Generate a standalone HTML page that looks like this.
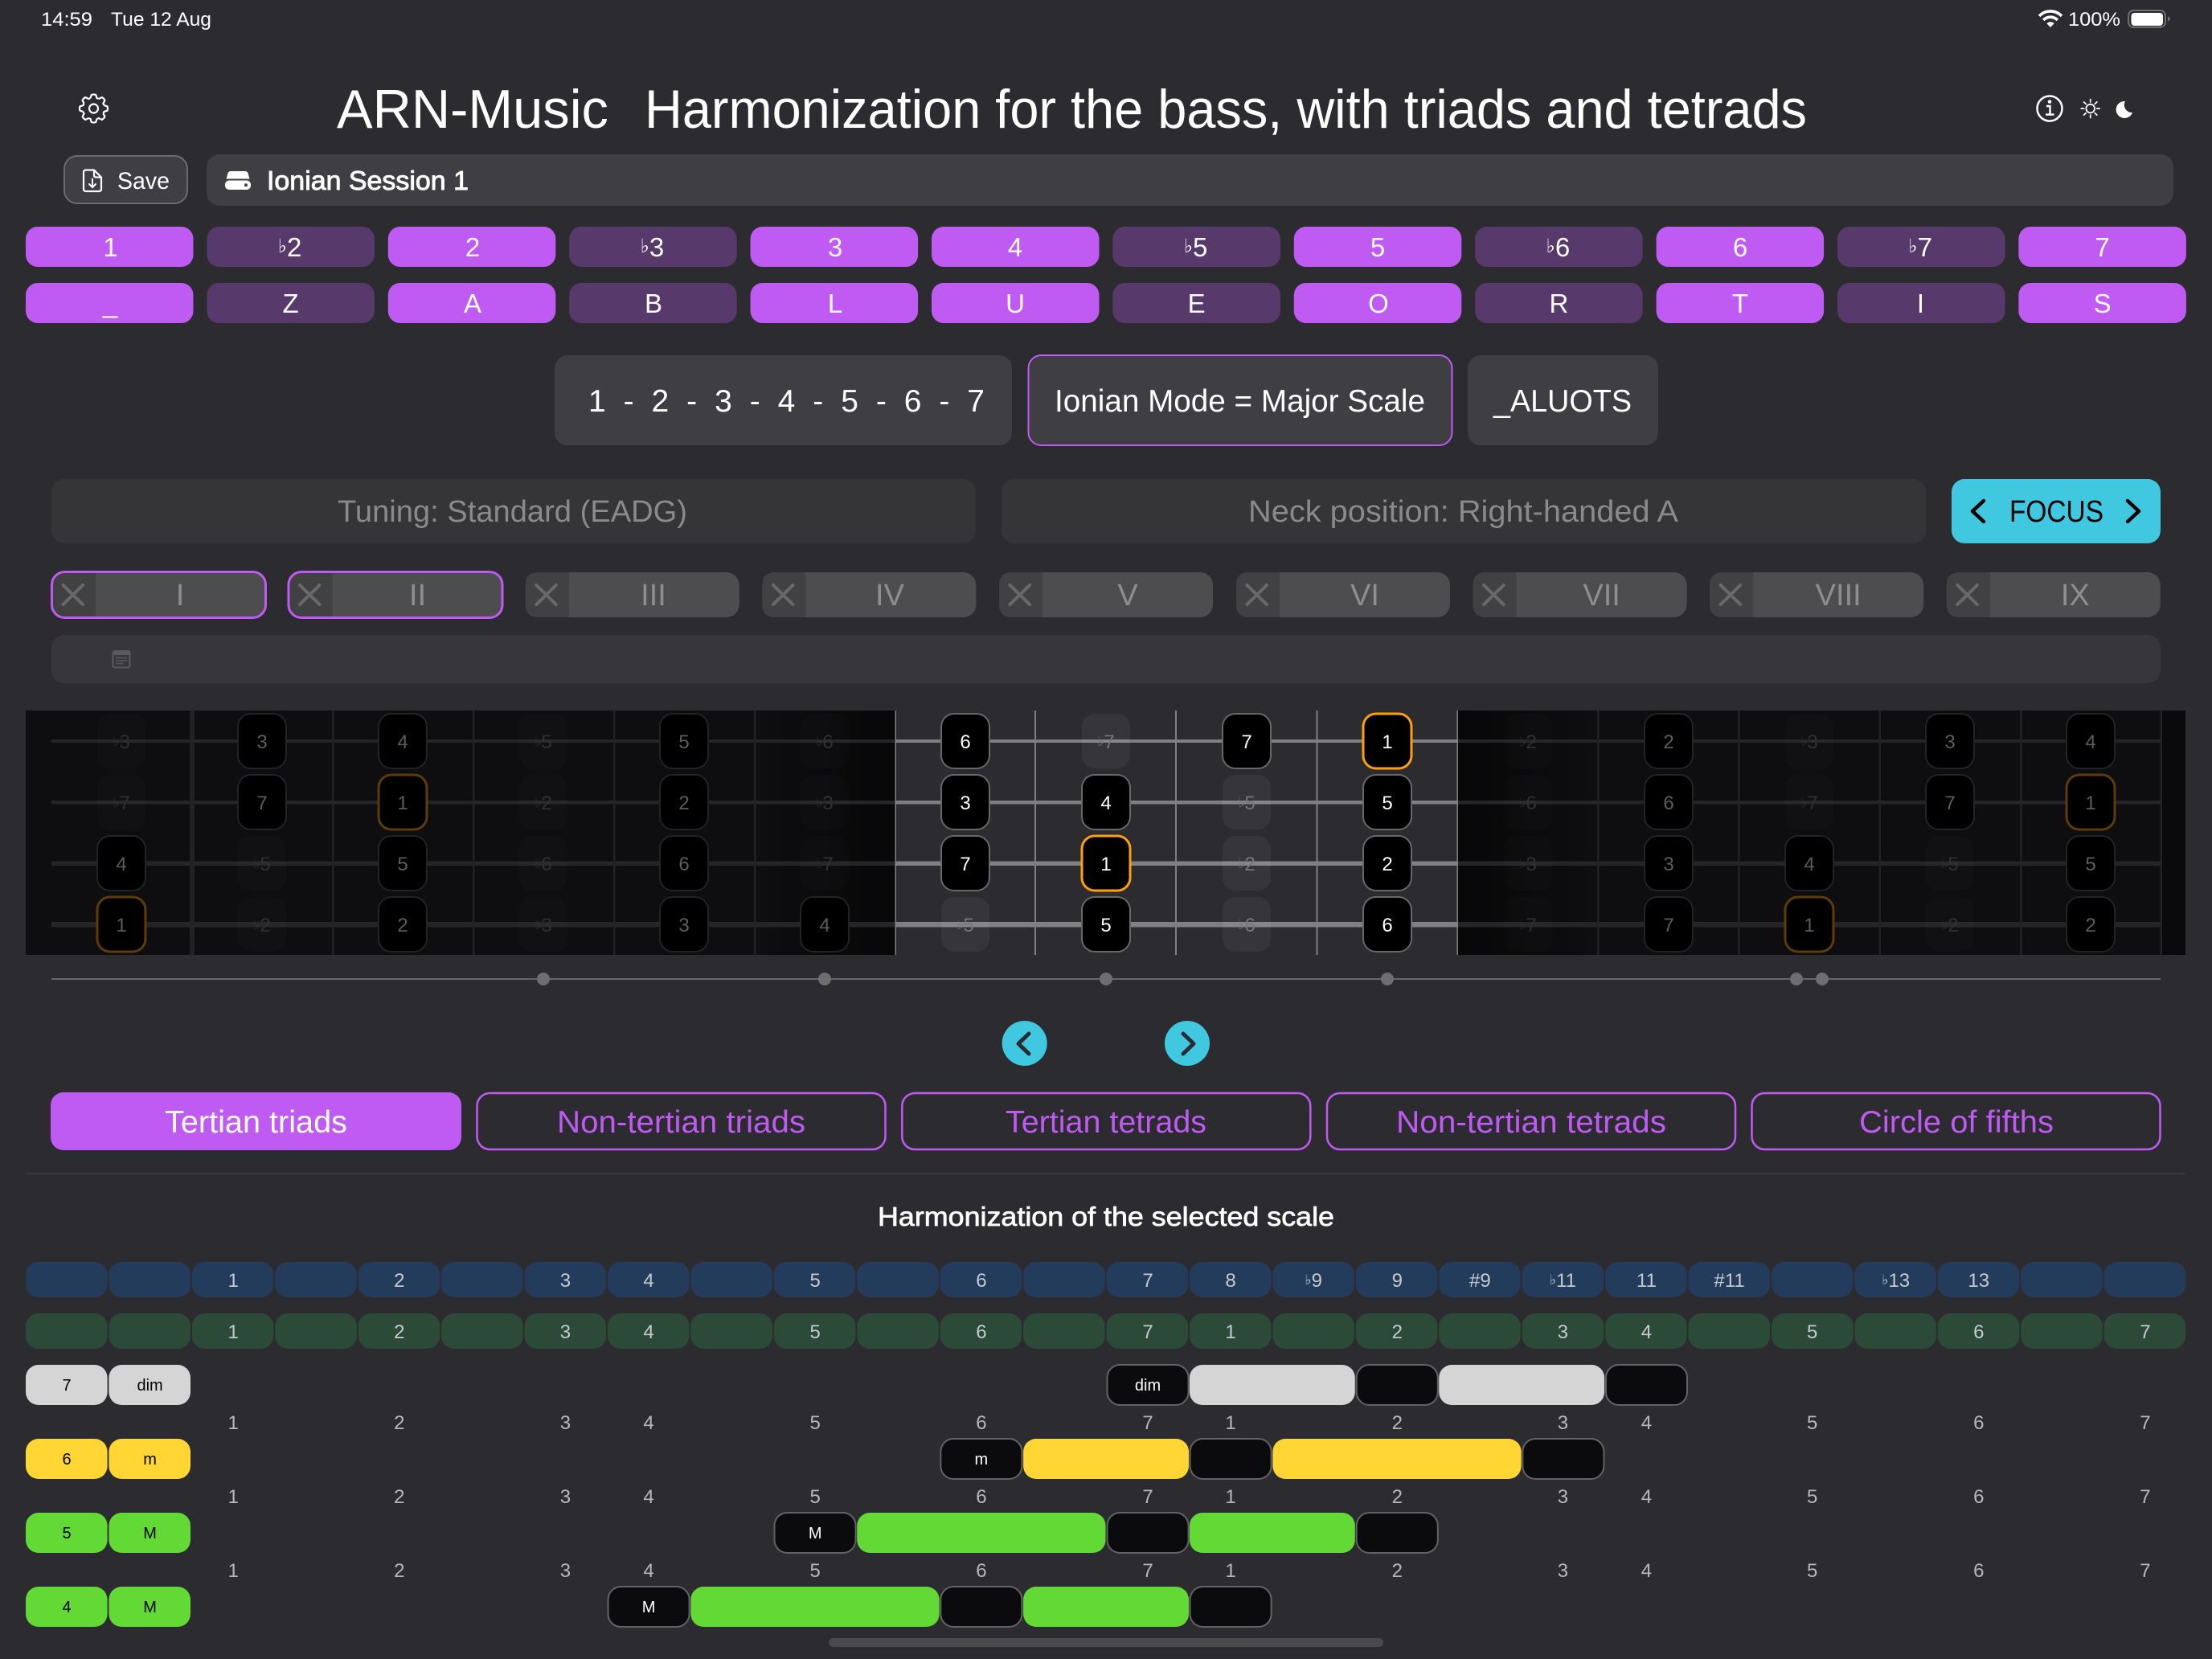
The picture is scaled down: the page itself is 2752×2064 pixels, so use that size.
<!DOCTYPE html>
<html lang="en"><head><meta charset="utf-8"><title>ARN-Music</title>
<style>
html,body{margin:0;padding:0;background:#2c2c30;width:2752px;height:2064px;overflow:hidden}
svg{display:block}
text{font-family:"Liberation Sans","DejaVu Sans",sans-serif;fill:#fff}
.m{text-anchor:middle}
.f{font-size:.72em;baseline-shift:.2em;font-family:"DejaVu Sans",sans-serif;font-weight:bold}
.k{width:208.5px;height:50px;rx:15px;ry:15px}
.on{fill:#bf5af2}.off{fill:#57396b}
.kt{font-size:33px;text-anchor:middle}
.pa{width:266px;height:56px;rx:16px;ry:16px;fill:#4d4d4f}
.pb{fill:#414143}
.pt{font-size:38px;text-anchor:middle;fill:#8e8e90}
.x{stroke:#69696b;stroke-width:4;stroke-linecap:round;fill:none}
.N{width:60px;height:68px;rx:16px;ry:16px}
.nt{font-size:24px;text-anchor:middle}
.da{fill:#000;stroke:#232325;stroke-width:2}
.dr{fill:#000;stroke:#5e3c0a;stroke-width:3}
.di{fill:#fff;fill-opacity:.015}
.la{fill:#000;stroke:#68686b;stroke-width:2}
.lr{fill:#000;stroke:#ff9f0a;stroke-width:3}
.li{fill:#fff;fill-opacity:.05}
.dt{fill:#5c5c5e}.dti{fill:#303032}.lt{fill:#fff}.lti{fill:#77777a}
.tab{width:508px;height:70px;rx:16px;ry:16px;fill:none;stroke:#bf5af2;stroke-width:2.5}
.tt{font-size:39px;fill:#bf5af2}
.c{width:101.5px;height:44px;rx:16px;ry:16px}
.bl{fill:#243c5c}.gr{fill:#2b4b38}
.ct{font-size:24px;text-anchor:middle;fill:#c4cad0}
.nm{font-size:24px;text-anchor:middle;fill:#b8b8ba}
.h{height:50px;rx:16px;ry:16px}
.w{width:101.5px}.w2{width:205.7px}.w3{width:309px}
.g1{fill:#d5d5d5}.y1{fill:#ffd633}.g2{fill:#62d935}
.b{width:101px;height:50px;rx:16px;ry:16px;fill:#0b0b0d;stroke:#636366;stroke-width:2}
.lb{font-size:20px;text-anchor:middle;fill:#000}
.lw{font-size:20px;text-anchor:middle;fill:#fff}
</style></head><body>
<svg xmlns="http://www.w3.org/2000/svg" width="2752" height="2064" viewBox="0 0 2752 2064">
<defs>
<linearGradient id="gl" x1="0" x2="1" y1="0" y2="0"><stop offset="0" stop-color="#0e0e10"/><stop offset="1" stop-color="#070708"/></linearGradient>
<linearGradient id="gr" x1="0" x2="1" y1="0" y2="0"><stop offset="0" stop-color="#070708"/><stop offset="1" stop-color="#0e0e10"/></linearGradient>
</defs>
<rect width="2752" height="2064" fill="#2c2c30"/>

<!-- status bar -->
<text x="51" y="32" font-size="24" textLength="64" lengthAdjust="spacingAndGlyphs">14:59</text>
<text x="138" y="32" font-size="24" textLength="125" lengthAdjust="spacingAndGlyphs">Tue 12 Aug</text>
<g fill="none" stroke="#fff" stroke-width="3.6">
<path d="M2537.1 20A19 19 0 0 1 2564.9 20"/>
<path d="M2542.2 25A12 12 0 0 1 2559.8 25"/>
</g>
<path d="M2546.4 29.2A6.5 6.5 0 0 1 2555.6 29.2L2551 34Z" fill="#fff"/>
<text x="2573" y="32" font-size="24" textLength="65" lengthAdjust="spacingAndGlyphs">100%</text>
<rect x="2648" y="13" width="46" height="21" rx="6.5" fill="none" stroke="#6e6e70" stroke-width="2"/>
<rect x="2651.5" y="16" width="39.5" height="16" rx="4" fill="#fff"/>
<path d="M2697 20.5Q2700 21 2700 23.5Q2700 26 2697 26.5Z" fill="#6e6e70"/>

<!-- header -->
<g transform="translate(116.5 135)" fill="none" stroke="#fff" stroke-width="2.2" stroke-linejoin="round">
<path d="M-3.95-12.9L-2.74-17Q0-18 2.74-17L3.95-12.9A13.5 13.5 0 0 1 6.33-11.92"/>
<path transform="rotate(45)" d="M-3.95-12.9L-2.74-17Q0-18 2.74-17L3.95-12.9A13.5 13.5 0 0 1 6.33-11.92"/>
<path transform="rotate(90)" d="M-3.95-12.9L-2.74-17Q0-18 2.74-17L3.95-12.9A13.5 13.5 0 0 1 6.33-11.92"/>
<path transform="rotate(135)" d="M-3.95-12.9L-2.74-17Q0-18 2.74-17L3.95-12.9A13.5 13.5 0 0 1 6.33-11.92"/>
<path transform="rotate(180)" d="M-3.95-12.9L-2.74-17Q0-18 2.74-17L3.95-12.9A13.5 13.5 0 0 1 6.33-11.92"/>
<path transform="rotate(225)" d="M-3.95-12.9L-2.74-17Q0-18 2.74-17L3.95-12.9A13.5 13.5 0 0 1 6.33-11.92"/>
<path transform="rotate(270)" d="M-3.95-12.9L-2.74-17Q0-18 2.74-17L3.95-12.9A13.5 13.5 0 0 1 6.33-11.92"/>
<path transform="rotate(315)" d="M-3.95-12.9L-2.74-17Q0-18 2.74-17L3.95-12.9A13.5 13.5 0 0 1 6.33-11.92"/>
<circle r="5.5"/>
</g>
<text x="419" y="159" font-size="68" textLength="338" lengthAdjust="spacingAndGlyphs">ARN-Music</text>
<text x="802" y="159" font-size="68" textLength="1446" lengthAdjust="spacingAndGlyphs">Harmonization for the bass, with triads and tetrads</text>
<circle cx="2550" cy="135" r="15.5" fill="none" stroke="#fff" stroke-width="2.5"/>
<circle cx="2550" cy="126.5" r="2.3" fill="#fff"/>
<path d="M2546 132h4.5v10.5M2545 142.5h10.5" fill="none" stroke="#fff" stroke-width="2.4"/>
<circle cx="2600.7" cy="135" r="5.3" fill="none" stroke="#fff" stroke-width="1.8"/>
<path d="M2600.7 123.5v3.5M2600.7 143v3.500M2589.200 135h3.500M2608.700 135h3.500M2592.600 126.900l2.500 2.500M2606.300 140.600l2.500 2.500M2592.600 143.100l2.500-2.500M2606.300 129.400l2.500-2.500" stroke="#fff" stroke-width="1.7" stroke-linecap="round"/>
<path d="M2644 126A10.500 10.500 0 1 0 2653 140A9.500 9.500 0 0 1 2644 126Z" fill="#fff"/>

<!-- save + session -->
<rect x="80" y="194" width="153" height="59" rx="16" fill="#3e3e43" stroke="#6b6b6e" stroke-width="2"/>
<path d="M107 211.500H117L126 220.500V235Q126 238 123 238H107Q104 238 104 235V214.500Q104 211.500 107 211.500ZM117 211.500V218Q117 220.500 119.500 220.500H126" fill="none" stroke="#fff" stroke-width="2.200" stroke-linejoin="round"/>
<path d="M115 222.500V233M111 229l4 4.200 4-4.200" fill="none" stroke="#fff" stroke-width="2" stroke-linecap="round" stroke-linejoin="round"/>
<text x="146" y="235" font-size="30" textLength="65" lengthAdjust="spacingAndGlyphs">Save</text>
<rect x="257" y="192" width="2447" height="64" rx="16" fill="#3e3e43"/>
<path d="M287 213H305Q307.500 213 308.500 215.500L310.500 222.500H281.500L283.500 215.500Q284.500 213 287 213Z" fill="#fff"/>
<rect x="280" y="224.500" width="32" height="11.500" rx="5" fill="#fff"/>
<circle cx="306" cy="230.200" r="2" fill="#3e3e43"/>
<text x="332" y="236" font-size="33" stroke="#fff" stroke-width=".9" textLength="251" lengthAdjust="spacingAndGlyphs">Ionian Session 1</text>

<!-- key rows -->
<rect class="k on" x="32" y="282"/><rect class="k off" x="257.400" y="282"/><rect class="k on" x="482.800" y="282"/><rect class="k off" x="708.200" y="282"/><rect class="k on" x="933.600" y="282"/><rect class="k on" x="1159" y="282"/><rect class="k off" x="1384.400" y="282"/><rect class="k on" x="1609.800" y="282"/><rect class="k off" x="1835.200" y="282"/><rect class="k on" x="2060.600" y="282"/><rect class="k off" x="2286" y="282"/><rect class="k on" x="2511.400" y="282"/>
<text class="kt" x="137.500" y="319">1</text><text class="kt" x="360.600" y="319"><tspan class="f">♭</tspan>2</text><text class="kt" x="588" y="319">2</text><text class="kt" x="811.500" y="319"><tspan class="f">♭</tspan>3</text><text class="kt" x="1039" y="319">3</text><text class="kt" x="1263" y="319">4</text><text class="kt" x="1487.600" y="319"><tspan class="f">♭</tspan>5</text><text class="kt" x="1714" y="319">5</text><text class="kt" x="1938.400" y="319"><tspan class="f">♭</tspan>6</text><text class="kt" x="2165" y="319">6</text><text class="kt" x="2389.200" y="319"><tspan class="f">♭</tspan>7</text><text class="kt" x="2615.600" y="319">7</text>
<rect class="k on" x="32" y="352"/><rect class="k off" x="257.400" y="352"/><rect class="k on" x="482.800" y="352"/><rect class="k off" x="708.200" y="352"/><rect class="k on" x="933.600" y="352"/><rect class="k on" x="1159" y="352"/><rect class="k off" x="1384.400" y="352"/><rect class="k on" x="1609.800" y="352"/><rect class="k off" x="1835.200" y="352"/><rect class="k on" x="2060.600" y="352"/><rect class="k off" x="2286" y="352"/><rect class="k on" x="2511.400" y="352"/>
<text class="kt" x="137" y="389">_</text><text class="kt" x="361.600" y="389">Z</text><text class="kt" x="588" y="389">A</text><text class="kt" x="813" y="389">B</text><text class="kt" x="1039" y="389">L</text><text class="kt" x="1263" y="389">U</text><text class="kt" x="1488.600" y="389">E</text><text class="kt" x="1715" y="389">O</text><text class="kt" x="1939.400" y="389">R</text><text class="kt" x="2165" y="389">T</text><text class="kt" x="2389.500" y="389">I</text><text class="kt" x="2615.600" y="389">S</text>

<!-- mode boxes -->
<rect x="690" y="442" width="569" height="112" rx="16" fill="#3e3e43"/>
<text x="732" y="512" font-size="39" textLength="493" lengthAdjust="spacing">1 - 2 - 3 - 4 - 5 - 6 - 7</text>
<rect x="1279.500" y="442" width="527" height="112" rx="16" fill="#3e3e43" stroke="#bf5af2" stroke-width="2"/>
<text x="1312" y="512" font-size="39" textLength="461" lengthAdjust="spacingAndGlyphs">Ionian Mode = Major Scale</text>
<rect x="1826" y="442" width="237" height="112" rx="16" fill="#3e3e43"/>
<text x="1858" y="512" font-size="39" textLength="172" lengthAdjust="spacingAndGlyphs">_ALUOTS</text>

<!-- tuning / neck / focus -->
<rect x="64" y="596" width="1150" height="80" rx="16" fill="#353538"/>
<text x="420" y="649" font-size="38" style="fill:#8a8a8c" textLength="435" lengthAdjust="spacingAndGlyphs">Tuning: Standard (EADG)</text>
<rect x="1246" y="596" width="1150" height="80" rx="16" fill="#353538"/>
<text x="1553" y="649" font-size="38" style="fill:#8a8a8c" textLength="535" lengthAdjust="spacingAndGlyphs">Neck position: Right-handed A</text>
<rect x="2428" y="596" width="260" height="80" rx="16" fill="#40c8e0"/>
<path d="M2468 623L2454 636L2468 649M2647 623L2661 636L2647 649" fill="none" stroke="#000" stroke-width="4.500" stroke-linecap="round" stroke-linejoin="round"/>
<text x="2500" y="649" font-size="38" style="fill:#000" textLength="117" lengthAdjust="spacingAndGlyphs">FOCUS</text>

<!-- position pills -->
<g>
<rect class="pa" x="65" y="712"/><path class="pb" d="M119 712H81Q65 712 65 728V752Q65 768 81 768H119Z"/>
<rect class="pa" x="359.600" y="712"/><path class="pb" d="M413.600 712H375.600Q359.600 712 359.600 728V752Q359.600 768 375.600 768H413.600Z"/>
<rect class="pa" x="653.800" y="712"/><path class="pb" d="M707.800 712H669.800Q653.800 712 653.800 728V752Q653.800 768 669.800 768H707.800Z"/>
<rect class="pa" x="948.400" y="712"/><path class="pb" d="M1002.400 712H964.400Q948.400 712 948.400 728V752Q948.400 768 964.400 768H1002.400Z"/>
<rect class="pa" x="1243" y="712"/><path class="pb" d="M1297 712H1259Q1243 712 1243 728V752Q1243 768 1259 768H1297Z"/>
<rect class="pa" x="1538" y="712"/><path class="pb" d="M1592 712H1554Q1538 712 1538 728V752Q1538 768 1554 768H1592Z"/>
<rect class="pa" x="1832.600" y="712"/><path class="pb" d="M1886.600 712H1848.600Q1832.600 712 1832.600 728V752Q1832.600 768 1848.600 768H1886.600Z"/>
<rect class="pa" x="2127.200" y="712"/><path class="pb" d="M2181.200 712H2143.200Q2127.200 712 2127.200 728V752Q2127.200 768 2143.200 768H2181.200Z"/>
<rect class="pa" x="2421.800" y="712"/><path class="pb" d="M2475.800 712H2437.800Q2421.800 712 2421.800 728V752Q2421.800 768 2437.800 768H2475.800Z"/>
</g>
<rect x="64.500" y="711.500" width="266" height="57" rx="16" fill="none" stroke="#bf5af2" stroke-width="3"/>
<rect x="359" y="711.500" width="266" height="57" rx="16" fill="none" stroke="#bf5af2" stroke-width="3"/>
<path class="x" d="M78.500 728L103 752M103 728L78.500 752M373 728L397.500 752M397.500 728L373 752M667.300 728L691.800 752M691.800 728L667.300 752M961.900 728L986.400 752M986.400 728L961.900 752M1256.500 728L1281 752M1281 728L1256.500 752M1551.500 728L1576 752M1576 728L1551.500 752M1846.100 728L1870.600 752M1870.600 728L1846.100 752M2140.700 728L2165.200 752M2165.200 728L2140.700 752M2435.300 728L2459.800 752M2459.800 728L2435.300 752"/>
<text class="pt" x="224" y="753">I</text><text class="pt" x="519.600" y="753">II</text><text class="pt" x="813" y="753">III</text><text class="pt" x="1107" y="753">IV</text><text class="pt" x="1403" y="753">V</text><text class="pt" x="1698" y="753">VI</text><text class="pt" x="1992.600" y="753">VII</text><text class="pt" x="2287.200" y="753">VIII</text><text class="pt" x="2581.800" y="753">IX</text>

<!-- note bar -->
<rect x="64" y="790" width="2624" height="60" rx="16" fill="#37373b"/>
<rect x="140.500" y="810" width="21" height="20.500" rx="2.500" fill="none" stroke="#5a5a5c" stroke-width="2"/>
<path d="M140 812Q140 809 143 809H159Q162 809 162 812V815H140Z" fill="#5a5a5c"/>
<path d="M144 818.500H158M144 822H158M144 825.500H153" stroke="#5a5a5c" stroke-width="1.500"/>

<!-- fretboard -->
<rect x="32" y="884" width="2687" height="304" fill="#0e0e10"/>
<rect x="939" y="884" width="175" height="304" fill="url(#gl)"/>
<rect x="1813" y="884" width="175" height="304" fill="url(#gr)"/>
<rect x="2689" y="884" width="30" height="304" fill="#0a0a0c"/>
<rect x="1114" y="884" width="699" height="304" fill="#2c2c30"/>
<g fill="#252527">
<rect x="64" y="920" width="1050" height="4"/><rect x="64" y="996" width="1050" height="4.500"/><rect x="64" y="1071.500" width="1050" height="5.500"/><rect x="64" y="1147" width="1050" height="6.500"/>
<rect x="1813" y="920" width="875" height="4"/><rect x="1813" y="996" width="875" height="4.500"/><rect x="1813" y="1071.500" width="875" height="5.500"/><rect x="1813" y="1147" width="875" height="6.500"/>
</g>
<g fill="#808082">
<rect x="1114" y="920" width="699" height="4"/><rect x="1114" y="996" width="699" height="4.500"/><rect x="1114" y="1071.500" width="699" height="5.500"/><rect x="1114" y="1147" width="699" height="6.500"/>
<rect x="1113.500" y="884" width="1.500" height="304"/><rect x="1287" y="884" width="2" height="304"/><rect x="1462" y="884" width="2" height="304"/><rect x="1637.500" y="884" width="2" height="304"/><rect x="1812.500" y="884" width="1.500" height="304"/>
</g>
<g fill="#222224">
<rect x="236" y="884" width="6" height="304"/>
<rect x="413" y="884" width="2.500" height="304"/><rect x="588" y="884" width="2.500" height="304"/><rect x="763" y="884" width="2.500" height="304"/><rect x="938" y="884" width="2.500" height="304"/>
<rect x="1987" y="884" width="2.500" height="304"/><rect x="2162" y="884" width="2.500" height="304"/><rect x="2337.500" y="884" width="2.500" height="304"/><rect x="2513" y="884" width="2.500" height="304"/><rect x="2687.500" y="884" width="2.500" height="304"/>
</g>

<!-- row 1 -->
<rect class="N di" x="121" y="888"/><text class="nt dti" x="151" y="931"><tspan class="f">♭</tspan>3</text>
<rect class="N da" x="296" y="888"/><text class="nt dt" x="326" y="931">3</text>
<rect class="N da" x="471" y="888"/><text class="nt dt" x="501" y="931">4</text>
<rect class="N di" x="646" y="888"/><text class="nt dti" x="676" y="931"><tspan class="f">♭</tspan>5</text>
<rect class="N da" x="821" y="888"/><text class="nt dt" x="851" y="931">5</text>
<rect class="N di" x="996" y="888"/><text class="nt dti" x="1026" y="931"><tspan class="f">♭</tspan>6</text>
<rect class="N la" x="1171" y="888"/><text class="nt lt" x="1201" y="931">6</text>
<rect class="N li" x="1346" y="888"/><text class="nt lti" x="1376" y="931"><tspan class="f">♭</tspan>7</text>
<rect class="N la" x="1521" y="888"/><text class="nt lt" x="1551" y="931">7</text>
<rect class="N lr" x="1696" y="888"/><text class="nt lt" x="1726" y="931">1</text>
<rect class="N di" x="1871" y="888"/><text class="nt dti" x="1901" y="931"><tspan class="f">♭</tspan>2</text>
<rect class="N da" x="2046" y="888"/><text class="nt dt" x="2076" y="931">2</text>
<rect class="N di" x="2221" y="888"/><text class="nt dti" x="2251" y="931"><tspan class="f">♭</tspan>3</text>
<rect class="N da" x="2396" y="888"/><text class="nt dt" x="2426" y="931">3</text>
<rect class="N da" x="2571" y="888"/><text class="nt dt" x="2601" y="931">4</text>
<!-- row 2 -->
<rect class="N di" x="121" y="964"/><text class="nt dti" x="151" y="1007"><tspan class="f">♭</tspan>7</text>
<rect class="N da" x="296" y="964"/><text class="nt dt" x="326" y="1007">7</text>
<rect class="N dr" x="471" y="964"/><text class="nt dt" x="501" y="1007">1</text>
<rect class="N di" x="646" y="964"/><text class="nt dti" x="676" y="1007"><tspan class="f">♭</tspan>2</text>
<rect class="N da" x="821" y="964"/><text class="nt dt" x="851" y="1007">2</text>
<rect class="N di" x="996" y="964"/><text class="nt dti" x="1026" y="1007"><tspan class="f">♭</tspan>3</text>
<rect class="N la" x="1171" y="964"/><text class="nt lt" x="1201" y="1007">3</text>
<rect class="N la" x="1346" y="964"/><text class="nt lt" x="1376" y="1007">4</text>
<rect class="N li" x="1521" y="964"/><text class="nt lti" x="1551" y="1007"><tspan class="f">♭</tspan>5</text>
<rect class="N la" x="1696" y="964"/><text class="nt lt" x="1726" y="1007">5</text>
<rect class="N di" x="1871" y="964"/><text class="nt dti" x="1901" y="1007"><tspan class="f">♭</tspan>6</text>
<rect class="N da" x="2046" y="964"/><text class="nt dt" x="2076" y="1007">6</text>
<rect class="N di" x="2221" y="964"/><text class="nt dti" x="2251" y="1007"><tspan class="f">♭</tspan>7</text>
<rect class="N da" x="2396" y="964"/><text class="nt dt" x="2426" y="1007">7</text>
<rect class="N dr" x="2571" y="964"/><text class="nt dt" x="2601" y="1007">1</text>
<!-- row 3 -->
<rect class="N da" x="121" y="1040"/><text class="nt dt" x="151" y="1083">4</text>
<rect class="N di" x="296" y="1040"/><text class="nt dti" x="326" y="1083"><tspan class="f">♭</tspan>5</text>
<rect class="N da" x="471" y="1040"/><text class="nt dt" x="501" y="1083">5</text>
<rect class="N di" x="646" y="1040"/><text class="nt dti" x="676" y="1083"><tspan class="f">♭</tspan>6</text>
<rect class="N da" x="821" y="1040"/><text class="nt dt" x="851" y="1083">6</text>
<rect class="N di" x="996" y="1040"/><text class="nt dti" x="1026" y="1083"><tspan class="f">♭</tspan>7</text>
<rect class="N la" x="1171" y="1040"/><text class="nt lt" x="1201" y="1083">7</text>
<rect class="N lr" x="1346" y="1040"/><text class="nt lt" x="1376" y="1083">1</text>
<rect class="N li" x="1521" y="1040"/><text class="nt lti" x="1551" y="1083"><tspan class="f">♭</tspan>2</text>
<rect class="N la" x="1696" y="1040"/><text class="nt lt" x="1726" y="1083">2</text>
<rect class="N di" x="1871" y="1040"/><text class="nt dti" x="1901" y="1083"><tspan class="f">♭</tspan>3</text>
<rect class="N da" x="2046" y="1040"/><text class="nt dt" x="2076" y="1083">3</text>
<rect class="N da" x="2221" y="1040"/><text class="nt dt" x="2251" y="1083">4</text>
<rect class="N di" x="2396" y="1040"/><text class="nt dti" x="2426" y="1083"><tspan class="f">♭</tspan>5</text>
<rect class="N da" x="2571" y="1040"/><text class="nt dt" x="2601" y="1083">5</text>
<!-- row 4 -->
<rect class="N dr" x="121" y="1116"/><text class="nt dt" x="151" y="1159">1</text>
<rect class="N di" x="296" y="1116"/><text class="nt dti" x="326" y="1159"><tspan class="f">♭</tspan>2</text>
<rect class="N da" x="471" y="1116"/><text class="nt dt" x="501" y="1159">2</text>
<rect class="N di" x="646" y="1116"/><text class="nt dti" x="676" y="1159"><tspan class="f">♭</tspan>3</text>
<rect class="N da" x="821" y="1116"/><text class="nt dt" x="851" y="1159">3</text>
<rect class="N da" x="996" y="1116"/><text class="nt dt" x="1026" y="1159">4</text>
<rect class="N li" x="1171" y="1116"/><text class="nt lti" x="1201" y="1159"><tspan class="f">♭</tspan>5</text>
<rect class="N la" x="1346" y="1116"/><text class="nt lt" x="1376" y="1159">5</text>
<rect class="N li" x="1521" y="1116"/><text class="nt lti" x="1551" y="1159"><tspan class="f">♭</tspan>6</text>
<rect class="N la" x="1696" y="1116"/><text class="nt lt" x="1726" y="1159">6</text>
<rect class="N di" x="1871" y="1116"/><text class="nt dti" x="1901" y="1159"><tspan class="f">♭</tspan>7</text>
<rect class="N da" x="2046" y="1116"/><text class="nt dt" x="2076" y="1159">7</text>
<rect class="N dr" x="2221" y="1116"/><text class="nt dt" x="2251" y="1159">1</text>
<rect class="N di" x="2396" y="1116"/><text class="nt dti" x="2426" y="1159"><tspan class="f">♭</tspan>2</text>
<rect class="N da" x="2571" y="1116"/><text class="nt dt" x="2601" y="1159">2</text>

<!-- slider -->
<rect x="64" y="1217" width="2624" height="2" fill="#666668"/>
<g fill="#6e6e70"><circle cx="676" cy="1218" r="8"/><circle cx="1026" cy="1218" r="8"/><circle cx="1376" cy="1218" r="8"/><circle cx="1726" cy="1218" r="8"/><circle cx="2235" cy="1218" r="8"/><circle cx="2267" cy="1218" r="8"/></g>

<!-- arrows -->
<circle cx="1274.700" cy="1298" r="28" fill="#40c8e0"/><circle cx="1477" cy="1298" r="28" fill="#40c8e0"/>
<path d="M1280 1286L1267 1298.500L1280 1311M1472 1286L1485 1298.500L1472 1311" fill="none" stroke="#2c2c30" stroke-width="5" stroke-linecap="round" stroke-linejoin="round"/>

<!-- tabs -->
<rect x="63" y="1359" width="511" height="72" rx="16" fill="#bf5af2"/>
<text x="205" y="1409" font-size="39" textLength="227" lengthAdjust="spacingAndGlyphs">Tertian triads</text>
<rect class="tab" x="593.500" y="1360"/>
<text class="tt" x="693" y="1409" textLength="309" lengthAdjust="spacingAndGlyphs">Non-tertian triads</text>
<rect class="tab" x="1122.300" y="1360"/>
<text class="tt" x="1251" y="1409" textLength="250" lengthAdjust="spacingAndGlyphs">Tertian tetrads</text>
<rect class="tab" x="1651" y="1360"/>
<text class="tt" x="1737" y="1409" textLength="336" lengthAdjust="spacingAndGlyphs">Non-tertian tetrads</text>
<rect class="tab" x="2179.500" y="1360"/>
<text class="tt" x="2313" y="1409" textLength="242" lengthAdjust="spacingAndGlyphs">Circle of fifths</text>

<rect x="32" y="1459.500" width="2687" height="1.500" fill="#3d3d40"/>
<text x="1092" y="1525" font-size="33" stroke="#fff" stroke-width=".7" textLength="568" lengthAdjust="spacingAndGlyphs">Harmonization of the selected scale</text>

<g transform="translate(32 0) scale(1.00074 1) translate(-32 0)">
<!-- blue row -->
<g class="bl">
<rect class="c" x="32" y="1570"/><rect class="c" x="135.350" y="1570"/><rect class="c" x="238.700" y="1570"/><rect class="c" x="342.050" y="1570"/><rect class="c" x="445.400" y="1570"/><rect class="c" x="548.750" y="1570"/><rect class="c" x="652.100" y="1570"/><rect class="c" x="755.450" y="1570"/><rect class="c" x="858.800" y="1570"/><rect class="c" x="962.150" y="1570"/><rect class="c" x="1065.500" y="1570"/><rect class="c" x="1168.850" y="1570"/><rect class="c" x="1272.200" y="1570"/><rect class="c" x="1375.550" y="1570"/><rect class="c" x="1478.900" y="1570"/><rect class="c" x="1582.250" y="1570"/><rect class="c" x="1685.600" y="1570"/><rect class="c" x="1788.950" y="1570"/><rect class="c" x="1892.300" y="1570"/><rect class="c" x="1995.650" y="1570"/><rect class="c" x="2099" y="1570"/><rect class="c" x="2202.350" y="1570"/><rect class="c" x="2305.700" y="1570"/><rect class="c" x="2409.050" y="1570"/><rect class="c" x="2512.400" y="1570"/><rect class="c" x="2615.750" y="1570"/>
</g>
<text class="ct" x="290" y="1601">1</text><text class="ct" x="496.500" y="1601">2</text><text class="ct" x="703" y="1601">3</text><text class="ct" x="806.500" y="1601">4</text><text class="ct" x="1013.500" y="1601">5</text><text class="ct" x="1220" y="1601">6</text><text class="ct" x="1427" y="1601">7</text><text class="ct" x="1530" y="1601">8</text><text class="ct" x="1633" y="1601"><tspan class="f">♭</tspan>9</text><text class="ct" x="1737" y="1601">9</text><text class="ct" x="1840" y="1601">#9</text><text class="ct" x="1943" y="1601"><tspan class="f">♭</tspan>11</text><text class="ct" x="2047" y="1601">11</text><text class="ct" x="2150" y="1601">#11</text><text class="ct" x="2357" y="1601"><tspan class="f">♭</tspan>13</text><text class="ct" x="2460" y="1601">13</text>

<!-- green row -->
<g class="gr">
<rect class="c" x="32" y="1634"/><rect class="c" x="135.350" y="1634"/><rect class="c" x="238.700" y="1634"/><rect class="c" x="342.050" y="1634"/><rect class="c" x="445.400" y="1634"/><rect class="c" x="548.750" y="1634"/><rect class="c" x="652.100" y="1634"/><rect class="c" x="755.450" y="1634"/><rect class="c" x="858.800" y="1634"/><rect class="c" x="962.150" y="1634"/><rect class="c" x="1065.500" y="1634"/><rect class="c" x="1168.850" y="1634"/><rect class="c" x="1272.200" y="1634"/><rect class="c" x="1375.550" y="1634"/><rect class="c" x="1478.900" y="1634"/><rect class="c" x="1582.250" y="1634"/><rect class="c" x="1685.600" y="1634"/><rect class="c" x="1788.950" y="1634"/><rect class="c" x="1892.300" y="1634"/><rect class="c" x="1995.650" y="1634"/><rect class="c" x="2099" y="1634"/><rect class="c" x="2202.350" y="1634"/><rect class="c" x="2305.700" y="1634"/><rect class="c" x="2409.050" y="1634"/><rect class="c" x="2512.400" y="1634"/><rect class="c" x="2615.750" y="1634"/>
</g>
<text class="ct" x="290" y="1665">1</text><text class="ct" x="496.500" y="1665">2</text><text class="ct" x="703" y="1665">3</text><text class="ct" x="806.500" y="1665">4</text><text class="ct" x="1013.500" y="1665">5</text><text class="ct" x="1220" y="1665">6</text><text class="ct" x="1427" y="1665">7</text><text class="ct" x="1530" y="1665">1</text><text class="ct" x="1737" y="1665">2</text><text class="ct" x="1943" y="1665">3</text><text class="ct" x="2047" y="1665">4</text><text class="ct" x="2253" y="1665">5</text><text class="ct" x="2460" y="1665">6</text><text class="ct" x="2667" y="1665">7</text>

<!-- chord row: 7 dim -->
<rect class="h w g1" x="32" y="1698"/><rect class="h w g1" x="135.350" y="1698"/>
<text class="lb" x="83" y="1730">7</text><text class="lb" x="186.500" y="1730">dim</text>
<rect class="b" x="1376.500" y="1698"/><text class="lw" x="1427" y="1730">dim</text>
<rect class="h w2 g1" x="1478.900" y="1698"/>
<rect class="b" x="1686.500" y="1698"/>
<rect class="h w2 g1" x="1788.950" y="1698"/>
<rect class="b" x="1996.500" y="1698"/>
<text class="nm" x="290" y="1778">1</text><text class="nm" x="496.500" y="1778">2</text><text class="nm" x="703" y="1778">3</text><text class="nm" x="806.500" y="1778">4</text><text class="nm" x="1013.500" y="1778">5</text><text class="nm" x="1220" y="1778">6</text><text class="nm" x="1427" y="1778">7</text><text class="nm" x="1530" y="1778">1</text><text class="nm" x="1737" y="1778">2</text><text class="nm" x="1943" y="1778">3</text><text class="nm" x="2047" y="1778">4</text><text class="nm" x="2253" y="1778">5</text><text class="nm" x="2460" y="1778">6</text><text class="nm" x="2667" y="1778">7</text>

<!-- chord row: 6 m -->
<rect class="h w y1" x="32" y="1790"/><rect class="h w y1" x="135.350" y="1790"/>
<text class="lb" x="83" y="1822">6</text><text class="lb" x="186.500" y="1822">m</text>
<rect class="b" x="1169.500" y="1790"/><text class="lw" x="1220" y="1822">m</text>
<rect class="h w2 y1" x="1272.200" y="1790"/>
<rect class="b" x="1479.500" y="1790"/>
<rect class="h w3 y1" x="1582.250" y="1790"/>
<rect class="b" x="1893" y="1790"/>
<text class="nm" x="290" y="1870">1</text><text class="nm" x="496.500" y="1870">2</text><text class="nm" x="703" y="1870">3</text><text class="nm" x="806.500" y="1870">4</text><text class="nm" x="1013.500" y="1870">5</text><text class="nm" x="1220" y="1870">6</text><text class="nm" x="1427" y="1870">7</text><text class="nm" x="1530" y="1870">1</text><text class="nm" x="1737" y="1870">2</text><text class="nm" x="1943" y="1870">3</text><text class="nm" x="2047" y="1870">4</text><text class="nm" x="2253" y="1870">5</text><text class="nm" x="2460" y="1870">6</text><text class="nm" x="2667" y="1870">7</text>

<!-- chord row: 5 M -->
<rect class="h w g2" x="32" y="1882"/><rect class="h w g2" x="135.350" y="1882"/>
<text class="lb" x="83" y="1914">5</text><text class="lb" x="186.500" y="1914">M</text>
<rect class="b" x="962.800" y="1882"/><text class="lw" x="1013.500" y="1914">M</text>
<rect class="h w3 g2" x="1065.500" y="1882"/>
<rect class="b" x="1376.500" y="1882"/>
<rect class="h w2 g2" x="1478.900" y="1882"/>
<rect class="b" x="1686.500" y="1882"/>
<text class="nm" x="290" y="1962">1</text><text class="nm" x="496.500" y="1962">2</text><text class="nm" x="703" y="1962">3</text><text class="nm" x="806.500" y="1962">4</text><text class="nm" x="1013.500" y="1962">5</text><text class="nm" x="1220" y="1962">6</text><text class="nm" x="1427" y="1962">7</text><text class="nm" x="1530" y="1962">1</text><text class="nm" x="1737" y="1962">2</text><text class="nm" x="1943" y="1962">3</text><text class="nm" x="2047" y="1962">4</text><text class="nm" x="2253" y="1962">5</text><text class="nm" x="2460" y="1962">6</text><text class="nm" x="2667" y="1962">7</text>

<!-- chord row: 4 M -->
<rect class="h w g2" x="32" y="1974"/><rect class="h w g2" x="135.350" y="1974"/>
<text class="lb" x="83" y="2006">4</text><text class="lb" x="186.500" y="2006">M</text>
<rect class="b" x="756" y="1974"/><text class="lw" x="806.500" y="2006">M</text>
<rect class="h w3 g2" x="858.800" y="1974"/>
<rect class="b" x="1169.500" y="1974"/>
<rect class="h w2 g2" x="1272.200" y="1974"/>
<rect class="b" x="1479.500" y="1974"/>
</g>

<!-- home indicator -->
<rect x="1031" y="2038" width="690" height="11" rx="5.500" fill="#4a4a4c"/>
</svg>
</body></html>
